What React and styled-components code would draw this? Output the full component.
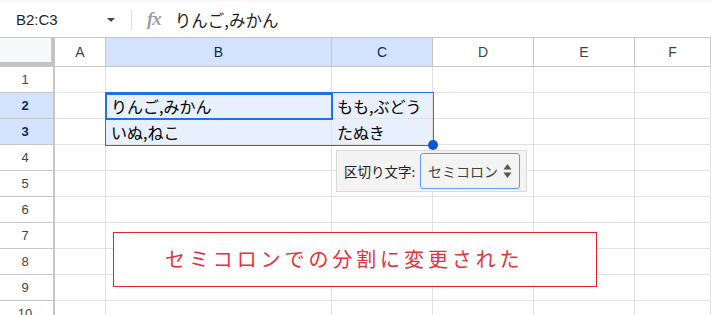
import React from "react";
import styled, { createGlobalStyle } from "styled-components";

const GlobalStyle = createGlobalStyle`
  html, body {
    margin: 0;
    padding: 0;
    background: #fff;
  }
  body {
    font-family: Roboto, "Liberation Sans", "Noto Sans CJK JP", sans-serif;
  }
`;

const Page = styled.div`
  width: 711px;
  height: 315px;
  overflow: hidden;
  background: #fff;
  border-top: 2px solid #f8f8f8;
  box-sizing: border-box;
`;

const FormulaBar = styled.div`
  height: 35px;
  display: flex;
  align-items: center;
`;

const NameBox = styled.div`
  width: 86px;
  padding-left: 16px;
  font-family: "Liberation Sans", Arial, sans-serif;
  font-size: 15px;
  color: #1f1f1f;
`;

const Caret = styled.span`
  width: 0;
  height: 0;
  border-left: 4px solid transparent;
  border-right: 4px solid transparent;
  border-top: 4px solid #444;
  margin-left: 5px;
`;

const Divider = styled.span`
  width: 1px;
  height: 20px;
  background: #dadce0;
  margin-left: 16px;
`;

const Fx = styled.span`
  font-family: "Liberation Serif", serif;
  font-style: italic;
  font-weight: bold;
  font-size: 19px;
  color: #a0a0a0;
  margin-left: 15px;
  margin-top: -2px;
  letter-spacing: -1px;
`;

const FormulaText = styled.span`
  margin-left: 14px;
  font-family: "Noto Sans CJK JP", sans-serif;
  font-size: 16.5px;
  color: #1f1f1f;
`;

const Sheet = styled.div`
  position: relative;
  height: 278px;
  border-top: 1px solid #c4c7c5;
  display: grid;
  grid-template-columns: 55px 51px 226px 101px 101px 101px 1fr;
  grid-template-rows: 29px;
  grid-auto-rows: 26px;
  overflow: hidden;
`;

const Corner = styled.div`
  background: #f8f9fa;
  border-right: 4px solid #c4c4c4;
  border-bottom: 5px solid #c4c4c4;
`;

const ColHead = styled.div`
  display: flex;
  align-items: center;
  justify-content: center;
  font-family: "Liberation Sans", Arial, sans-serif;
  font-size: 14px;
  color: ${(p) => (p.$sel ? "#0b2a5b" : "#444")};
  background: ${(p) => (p.$sel ? "#d3e3fd" : "#fff")};
  border-right: 1px solid #c4c7c5;
  border-bottom: 1px solid #c4c7c5;
`;

const RowHead = styled.div`
  display: flex;
  align-items: center;
  justify-content: center;
  padding-right: 3px;
  font-family: "Liberation Sans", Arial, sans-serif;
  font-size: 13px;
  font-weight: ${(p) => (p.$sel ? "bold" : "normal")};
  color: ${(p) => (p.$sel ? "#0b2a5b" : "#444")};
  background: ${(p) => (p.$sel ? "#d3e3fd" : "#fff")};
  border-right: 2px solid #c4c7c5;
  border-bottom: 1px solid #c4c7c5;
`;

const Cell = styled.div`
  display: flex;
  align-items: center;
  padding-left: 5px;
  font-family: "Noto Sans CJK JP", sans-serif;
  font-size: 16px;
  color: #000;
  white-space: nowrap;
  overflow: hidden;
  background: ${(p) => (p.$sel ? "#e8f0fd" : "#fff")};
  border-right: 1px solid #e2e2e2;
  border-bottom: 1px solid #e2e2e2;
`;

const Selection = styled.div`
  position: absolute;
  left: 105px;
  top: 54px;
  width: 327px;
  height: 52px;
  border: 1px solid #1a73e8;
  pointer-events: none;
`;

const ActiveCell = styled.div`
  position: absolute;
  left: 105px;
  top: 55px;
  width: 224px;
  height: 23px;
  border: 2px solid #1a73e8;
  pointer-events: none;
`;

const Handle = styled.div`
  position: absolute;
  left: 428px;
  top: 102px;
  width: 10px;
  height: 10px;
  border-radius: 50%;
  background: #0b57d0;
`;

const Popup = styled.div`
  position: absolute;
  left: 336px;
  top: 112px;
  width: 191px;
  height: 42px;
  box-sizing: border-box;
  background: #f3f3f3;
  border: 1px solid #dadada;
  display: flex;
  align-items: center;
  justify-content: space-between;
  padding: 0 6px 0 7px;
`;

const PopupLabel = styled.span`
  font-family: "Noto Sans CJK JP", sans-serif;
  font-size: 13.5px;
  color: #222;
  white-space: nowrap;
`;

const Select = styled.div`
  width: 100px;
  height: 36px;
  box-sizing: border-box;
  border: 1px solid #5b9cf3;
  border-radius: 3px;
  background: #f3f3f3;
  display: flex;
  align-items: center;
  justify-content: space-between;
  padding: 0 7px 0 7px;
  font-family: "Noto Sans CJK JP", sans-serif;
  font-size: 14px;
  color: #444;
`;

const Notice = styled.div`
  position: absolute;
  left: 113px;
  top: 194px;
  width: 484px;
  height: 55px;
  box-sizing: border-box;
  border: 1px solid #e8202a;
  background: #fff;
  display: flex;
  align-items: center;
  padding: 0 0 3px 51px;
  font-family: "Noto Sans CJK JP", sans-serif;
  font-size: 20px;
  letter-spacing: 3.9px;
  color: #e8303a;
`;

const UpDown = () => (
  <svg width="9" height="16" viewBox="0 0 9 16">
    <path d="M4.5 1 L8.5 6.5 L0.5 6.5 Z" fill="#555" />
    <path d="M4.5 15 L8.5 9.5 L0.5 9.5 Z" fill="#555" />
  </svg>
);

const cols = ["A", "B", "C", "D", "E", "F"];
const data = {
  2: { B: "りんご,みかん", C: "もも,ぶどう" },
  3: { B: "いぬ,ねこ", C: "たぬき" },
};

const isSel = (r, c) => (r === 2 || r === 3) && (c === "B" || c === "C");

export default function App() {
  const rows = Array.from({ length: 10 }, (_, i) => i + 1);
  return (
    <>
      <GlobalStyle />
      <Page>
        <FormulaBar>
          <NameBox>B2:C3</NameBox>
          <Caret />
          <Divider />
          <Fx>fx</Fx>
          <FormulaText>りんご,みかん</FormulaText>
        </FormulaBar>
        <Sheet>
          <Corner />
          {cols.map((c) => (
            <ColHead key={c} $sel={c === "B" || c === "C"}>
              {c}
            </ColHead>
          ))}
          {rows.map((r) => (
            <React.Fragment key={r}>
              <RowHead $sel={r === 2 || r === 3}>{r}</RowHead>
              {cols.map((c) => (
                <Cell key={c} $sel={isSel(r, c)}>
                  {data[r] && data[r][c]}
                </Cell>
              ))}
            </React.Fragment>
          ))}
          <Selection />
          <ActiveCell />
          <Handle />
          <Popup>
            <PopupLabel>区切り文字:</PopupLabel>
            <Select>
              <span>セミコロン</span>
              <UpDown />
            </Select>
          </Popup>
          <Notice>セミコロンでの分割に変更された</Notice>
        </Sheet>
      </Page>
    </>
  );
}
